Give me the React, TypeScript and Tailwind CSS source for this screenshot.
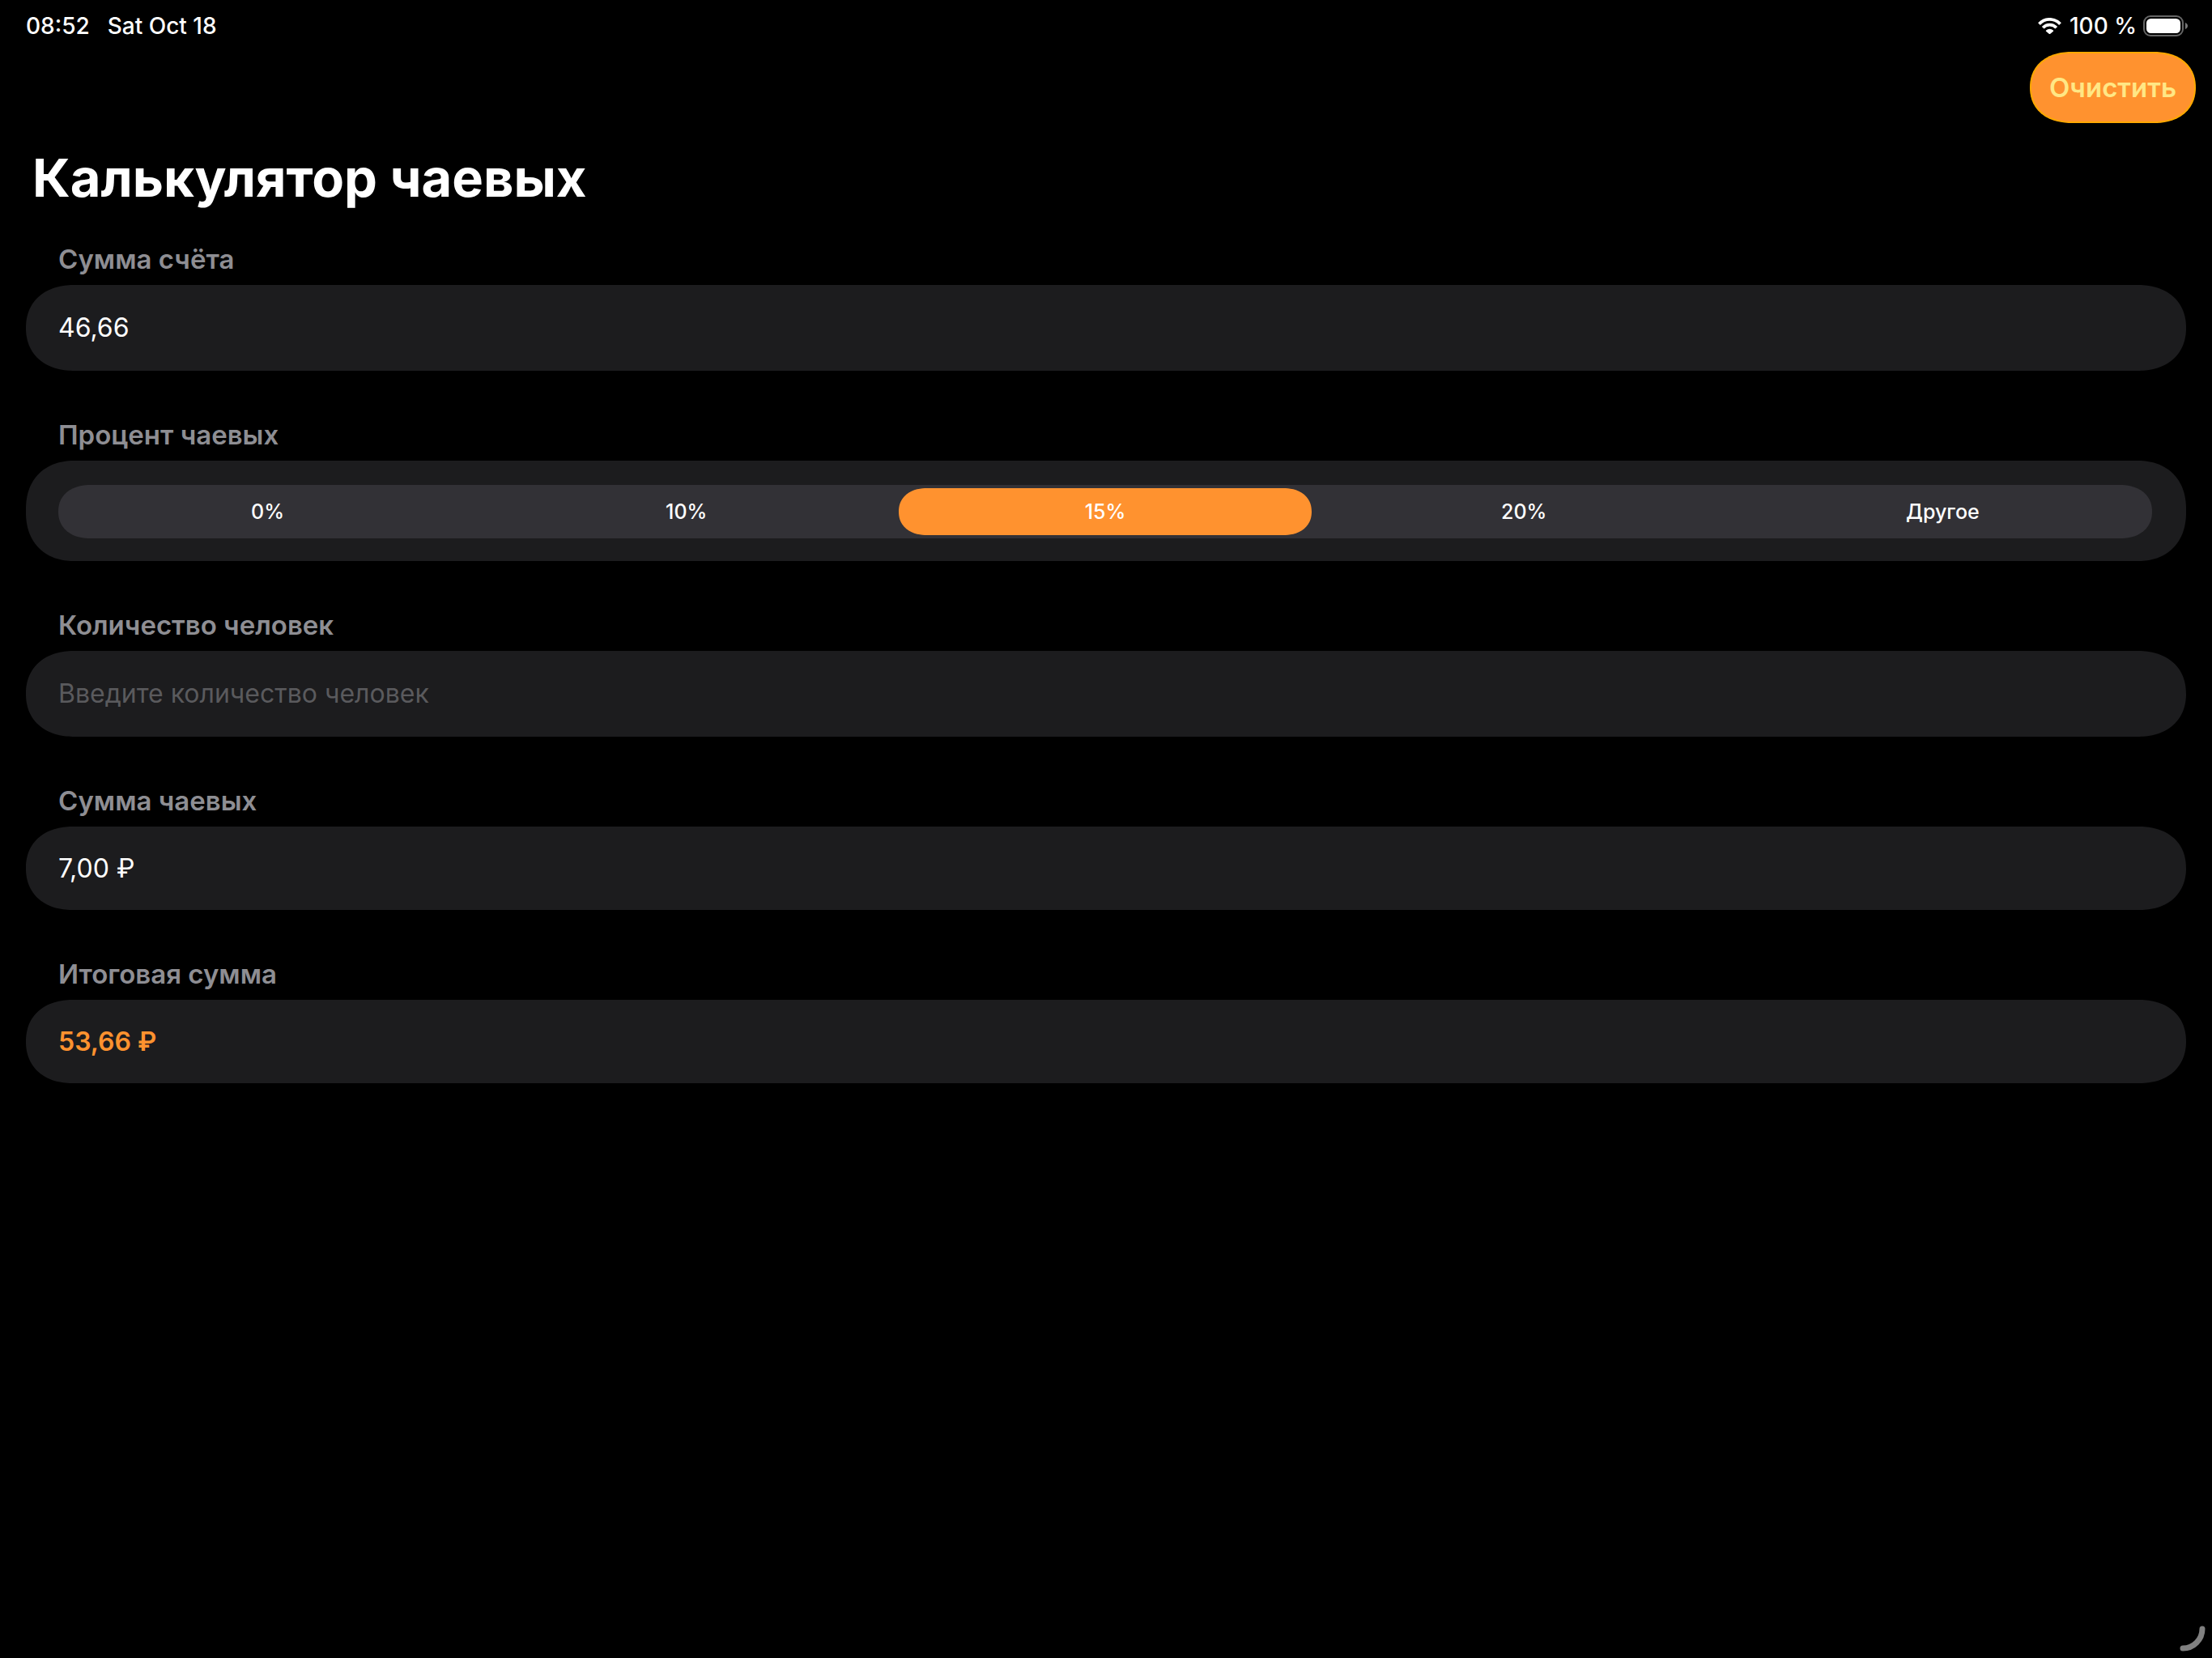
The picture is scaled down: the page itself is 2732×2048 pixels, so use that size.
import { useState } from "react";
import type { ReactNode } from "react";

const TIP_OPTIONS = ["0%", "10%", "15%", "20%", "Другое"];

const parseAmount = (text: string) => Number(text.replace(",", ".")) || 0;
const formatRubles = (value: number) => `${value.toFixed(2).replace(".", ",")} ₽`;

function WifiIcon() {
  return (
    <svg className="h-5 w-[29px]" viewBox="0 0 29 20" aria-hidden="true">
      <g fill="none" stroke="#fff" strokeWidth="3.8">
        <path d="M1.5 7.6a17.6 17.6 0 0 1 26 0" />
        <path d="M6.2 12.3a11.2 11.2 0 0 1 16.6 0" />
      </g>
      <path
        d="M10.1 15.6a6.2 6.2 0 0 1 8.8 0c.4.4.4.7 0 1.1l-3.6 3c-.5.4-1.1.4-1.6 0l-3.6-3c-.4-.4-.4-.7 0-1.1Z"
        fill="#fff"
      />
    </svg>
  );
}

function BatteryIcon() {
  return (
    <svg className="h-[26px] w-[55px]" viewBox="0 0 55 26" aria-hidden="true">
      <rect x="1" y="1" width="48" height="24" rx="8" fill="none" stroke="#666" strokeWidth="2" />
      <rect x="4" y="4" width="42" height="18" rx="5.5" fill="#fff" />
      <path d="M52 9c4 1.6 4 6.4 0 8Z" fill="#777" />
    </svg>
  );
}

function StatusBar() {
  return (
    <div className="flex h-16 items-center justify-between pr-[30px] pl-8 text-[28px] leading-10 font-medium">
      <div className="flex items-center gap-[22px]">
        <span>08:52</span>
        <span>Sat Oct 18</span>
      </div>
      <div className="flex items-center gap-2">
        <span className="flex items-center gap-[10px]">
          <WifiIcon />
          100 %
        </span>
        <BatteryIcon />
      </div>
    </div>
  );
}

const headingClass = "px-10 text-[33px] leading-10 font-semibold text-[#8e8e93]";
const cardClass =
  "flex items-center rounded-[60px/53px] [corner-shape:superellipse(1.15)] bg-[#1c1c1e] px-10 text-[32px] leading-10";

function InputSection(props: {
  id: string;
  label: string;
  value: string;
  placeholder: string;
  onChange: (value: string) => void;
}) {
  return (
    <section className="flex flex-col gap-3">
      <label htmlFor={props.id} className={headingClass}>
        {props.label}
      </label>
      <div className={`${cardClass} h-[106px]`}>
        <input
          id={props.id}
          type="text"
          inputMode="decimal"
          value={props.value}
          placeholder={props.placeholder}
          onChange={(event) => props.onChange(event.target.value)}
          className="w-full bg-transparent text-white outline-none placeholder:text-[#5a5a5d]"
        />
      </div>
    </section>
  );
}

function ResultSection({ label, children }: { label: string; children: ReactNode }) {
  return (
    <section className="flex flex-col gap-3">
      <h2 className={headingClass}>{label}</h2>
      <div className={`${cardClass} h-[103px]`}>{children}</div>
    </section>
  );
}

export default function App() {
  const [bill, setBill] = useState("46,66");
  const [tip, setTip] = useState("15%");
  const [people, setPeople] = useState("");

  const billAmount = parseAmount(bill);
  const tipAmount = (billAmount * (parseInt(tip, 10) || 0)) / 100;

  const clear = () => {
    setBill("");
    setTip("0%");
    setPeople("");
  };

  return (
    <div className="min-h-screen bg-black font-[Inter,'Noto_Sans',sans-serif] text-white">
      <StatusBar />

      <header>
        <div className="flex justify-end px-5">
          <button
            type="button"
            onClick={clear}
            className="h-[88px] rounded-[52px/44px] border-2 border-[#ffa800] bg-[#ff922f] px-[22px] text-[33px] leading-10 font-semibold text-[#ffe785] [corner-shape:superellipse(1.15)]"
          >
            Очистить
          </button>
        </div>
        <h1 className="mt-7 px-10 text-[65px] leading-[80px] font-bold">Калькулятор чаевых</h1>
      </header>

      <main className="mt-10 flex flex-col gap-[59px] px-8 pb-16">
        <InputSection
          id="bill"
          label="Сумма счёта"
          value={bill}
          placeholder="Введите сумму счёта"
          onChange={setBill}
        />

        <fieldset>
          <legend className={headingClass}>Процент чаевых</legend>
          <div className="mt-3 rounded-[60px] bg-[#1c1c1e] pt-[30px] pr-[42px] pb-7 pl-10 [corner-shape:superellipse(1.15)]">
            <div className="grid grid-cols-5 rounded-[40px/33px] bg-[#323136] py-1 [corner-shape:superellipse(1.15)]">
              {TIP_OPTIONS.map((option) => (
                <label
                  key={option}
                  className="mx-1 flex h-[58px] items-center justify-center rounded-[35px/29px] text-[25px] leading-8 font-medium [corner-shape:superellipse(1.15)] has-checked:bg-[#ff922f]"
                >
                  <input
                    type="radio"
                    name="tip"
                    value={option}
                    checked={tip === option}
                    onChange={() => setTip(option)}
                    className="sr-only"
                  />
                  {option}
                </label>
              ))}
            </div>
          </div>
        </fieldset>

        <InputSection
          id="people"
          label="Количество человек"
          value={people}
          placeholder="Введите количество человек"
          onChange={setPeople}
        />

        <ResultSection label="Сумма чаевых">
          <output>{formatRubles(tipAmount)}</output>
        </ResultSection>

        <ResultSection label="Итоговая сумма">
          <output className="font-semibold text-[#ff922f]">{formatRubles(billAmount + tipAmount)}</output>
        </ResultSection>
      </main>

      <svg className="fixed right-2 bottom-2 h-8 w-8" viewBox="0 0 32 32" aria-hidden="true">
        <path d="M4 28A24 24 0 0 0 28 4" fill="none" stroke="#808080" strokeWidth="7" strokeLinecap="round" />
      </svg>
    </div>
  );
}
